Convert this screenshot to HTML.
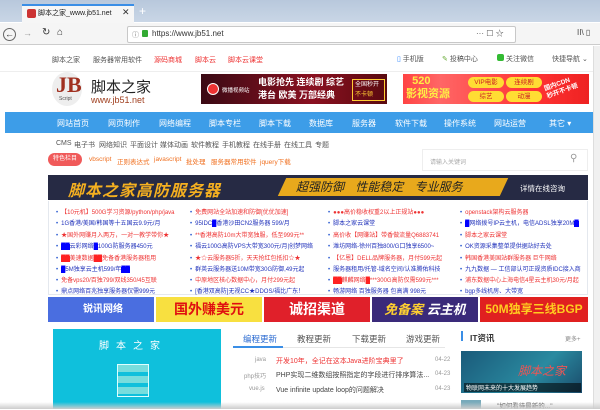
<!DOCTYPE html>
<html><head><meta charset="utf-8"><style>
*{margin:0;padding:0;box-sizing:border-box}
body{width:600px;height:409px;overflow:hidden;background:#fff;font-family:"Liberation Sans","Noto Sans CJK SC",sans-serif;font-size:8px;color:#333;position:relative}
.a{position:absolute;white-space:nowrap}
.r{color:#e33}.b{color:#2233bb}.o{color:#f07020}
.nav span{position:absolute;top:6px;color:#fff;font-size:8px}
.sub span{position:absolute;color:#555;font-size:7px}
.lst div{position:absolute;font-size:6px;white-space:nowrap;overflow:hidden;max-width:132px}
.lst div:before{content:"•";color:#2a5ad0;margin-right:3px}
</style></head><body>
<div class="a" style="left:0;top:0;width:600px;height:22px;background:linear-gradient(#b8c8dc,#c9d6e6)"></div>
<div class="a" style="left:22px;top:4px;width:112px;height:19px;background:#f6f6f6;border-top:2px solid #3a8ee6"></div>
<div class="a" style="left:27px;top:9px;width:9px;height:9px;background:#c33;border-radius:2px"></div>
<div class="a" style="left:38px;top:8px;font-size:7px;color:#222">脚本之家_www.jb51.net</div>
<div class="a" style="left:122px;top:7px;font-size:9px;color:#333">✕</div>
<div class="a" style="left:139px;top:4px;font-size:12px;color:#fff">+</div>
<div class="a" style="left:0;top:23px;width:600px;height:22px;background:#f5f5f5;border-bottom:1px solid #ccc"></div>
<div class="a" style="left:3px;top:28px;width:13px;height:13px;border:1px solid #666;border-radius:50%;font-size:9px;line-height:11px;text-align:center">←</div>
<div class="a" style="left:23px;top:28px;font-size:9px;color:#999">→</div>
<div class="a" style="left:42px;top:27px;font-size:10px;color:#333">↻</div>
<div class="a" style="left:57px;top:27px;font-size:10px;color:#333">⌂</div>
<div class="a" style="left:127px;top:26px;width:389px;height:17px;background:#fff;border:1px solid #c8c8c8;border-radius:2px"></div>
<div class="a" style="left:132px;top:30px;font-size:7px;color:#777">ⓘ</div>
<div class="a" style="left:142px;top:30px;width:6px;height:7px;background:#3a3;border-radius:1px"></div>
<div class="a" style="left:152px;top:29px;font-size:8px;color:#333">https://www.jb51.net</div>
<div class="a" style="left:476px;top:28px;font-size:8px;color:#555">··· ☐ ☆</div>
<div class="a" style="left:577px;top:28px;font-size:8px;color:#444">II\ ▯</div>
<div class="a" style="left:0;top:46px;width:600px;height:26px;border-bottom:1px solid #eee"></div>
<div class="a" style="top:55px;left:52px;color:#555;font-size:7px">脚本之家</div>
<div class="a" style="top:55px;left:93px;color:#555;font-size:7px">服务器常用软件</div>
<div class="a r" style="top:55px;left:154px;font-size:7px">源码商城</div>
<div class="a r" style="top:55px;left:195px;font-size:7px">脚本云</div>
<div class="a r" style="top:55px;left:228px;font-size:7px">脚本云课堂</div>
<div class="a" style="top:54px;left:397px;color:#555;font-size:7px"><span style="color:#38f">▯</span> 手机版</div>
<div class="a" style="top:54px;left:442px;color:#555;font-size:7px"><span style="color:#6a3">✎</span> 投稿中心</div>
<div class="a" style="top:54px;left:497px;color:#555;font-size:7px"><span style="display:inline-block;width:7px;height:7px;background:#3b3;border-radius:2px"></span> 关注微信</div>
<div class="a" style="top:54px;left:552px;color:#555;font-size:7px">快捷导航 ⌄</div>
<div class="a" style="left:52px;top:72px;width:30px;height:34px;border-radius:50%;background:#eee"></div>
<div class="a" style="left:56px;top:72px;font-size:22px;font-weight:bold;color:#a03020;font-family:'Liberation Serif',serif">JB</div>
<div class="a" style="left:59px;top:96px;font-size:5px;color:#555">Script</div>
<div class="a" style="left:91px;top:76px;font-size:15px;color:#222">脚本之家</div>
<div class="a" style="left:91px;top:95px;font-size:9px;color:#a04020">www.jb51.net</div>
<div class="a" style="left:201px;top:74px;width:186px;height:30px;background:linear-gradient(90deg,#3a0a14,#8a1020 60%,#5a0a10)"></div>
<div class="a" style="left:207px;top:83px;width:12px;height:12px;border-radius:50%;background:#e33;border:1px solid #fff"></div>
<div class="a" style="left:222px;top:86px;font-size:5.5px;color:#fff">微播视频站</div>
<div class="a" style="left:258px;top:76px;font-size:9px;color:#fff;font-weight:bold;line-height:13px">电影抢先 连续剧 综艺<br>港台 欧美 万部经典</div>
<div class="a" style="left:352px;top:79px;width:33px;height:22px;border:1px solid #fc3;font-size:6px;color:#fff;line-height:10px;padding-left:2px">全国秒开<br><span style="color:#fc3">不卡顿</span></div>
<div class="a" style="left:403px;top:74px;width:186px;height:30px;background:linear-gradient(90deg,#f44 0%,#f66 20%,#f33 70%,#e22)"></div>
<div class="a" style="left:406px;top:75px;font-size:11px;color:#fe4;font-weight:bold;line-height:13px">&nbsp;&nbsp;520<br>影视资源</div>
<div class="a" style="left:468px;top:77px;width:36px;height:11px;background:#fd3;border-radius:6px;font-size:6.5px;color:#c22;text-align:center;line-height:11px">VIP电影</div>
<div class="a" style="left:506px;top:77px;width:36px;height:11px;background:#fd3;border-radius:6px;font-size:6.5px;color:#c22;text-align:center;line-height:11px">连续剧</div>
<div class="a" style="left:468px;top:91px;width:36px;height:11px;background:#fd3;border-radius:6px;font-size:6.5px;color:#c22;text-align:center;line-height:11px">综艺</div>
<div class="a" style="left:506px;top:91px;width:36px;height:11px;background:#fd3;border-radius:6px;font-size:6.5px;color:#c22;text-align:center;line-height:11px">动漫</div>
<div class="a" style="left:545px;top:80px;font-size:6.5px;color:#fff;font-weight:bold;transform:rotate(-20deg);line-height:8px">国内CDN<br>秒开不卡顿</div>
<div class="a nav" style="left:5px;top:112px;width:588px;height:21px;background:#3d9de8">
<span style="left:52px">网站首页</span><span style="left:103px">网页制作</span><span style="left:154px">网络编程</span><span style="left:204px">脚本专栏</span><span style="left:254px">脚本下载</span><span style="left:304px">数据库</span><span style="left:347px">服务器</span><span style="left:390px">软件下载</span><span style="left:439px">操作系统</span><span style="left:489px">网站运营</span><span style="left:544px">其它 ▾</span></div>
<div class="sub">
<span style="left:56px;top:140px">CMS</span><span style="left:74px;top:140px">电子书</span><span style="left:99px;top:140px">网络知识</span><span style="left:130px;top:140px">平面设计</span><span style="left:160px;top:140px">媒体动画</span><span style="left:191px;top:140px">软件教程</span><span style="left:222px;top:140px">手机教程</span><span style="left:253px;top:140px">在线手册</span><span style="left:284px;top:140px">在线工具</span><span style="left:315px;top:140px">专题</span></div>
<div class="a" style="left:48px;top:153px;width:34px;height:13px;background:#f05a5a;border-radius:7px;color:#fff;font-size:6px;text-align:center;line-height:13px">特色栏目</div>
<div class="a o" style="left:89px;top:156px;font-size:6.5px">vbscript</div>
<div class="a o" style="left:117px;top:156px;font-size:6.5px">正则表达式</div>
<div class="a o" style="left:154px;top:156px;font-size:6.5px">javascript</div>
<div class="a o" style="left:186px;top:156px;font-size:6.5px">批处理</div>
<div class="a o" style="left:211px;top:156px;font-size:6.5px">服务器常用软件</div>
<div class="a o" style="left:260px;top:156px;font-size:6.5px">jquery下载</div>
<div class="a" style="left:422px;top:149px;width:166px;height:22px;border:1px solid #eee;background:#fff"></div>
<div class="a" style="left:430px;top:157px;font-size:6px;color:#aaa">请输入关键词</div>
<div class="a" style="left:570px;top:153px;font-size:10px;color:#999">⚲</div>
<div class="a" style="left:48px;top:175px;width:540px;height:25px;background:#262a44"></div>
<div class="a" style="left:68px;top:177px;font-size:16px;font-weight:bold;font-style:italic;color:#f5b020;letter-spacing:1px">脚本之家高防服务器</div>
<div class="a" style="left:282px;top:178px;width:222px;height:18px;background:#e8a91c;transform:skewX(-25deg)"></div>
<div class="a" style="left:296px;top:178px;font-size:12px;color:#222;font-style:italic;word-spacing:8px">超强防御 性能稳定 专业服务</div>
<div class="a" style="left:520px;top:183px;font-size:7.5px;color:#fff">详情在线咨询</div>
<div class="a" style="left:48px;top:201px;width:540px;height:94px;border:1px solid #e4e8ee;border-top:none"></div>
<div class="lst">
<div class="r" style="left:56px;top:207px">【10元机】500G学习资源/python/php/java</div>
<div class="b" style="left:56px;top:218px">1G香港/美国/韩国等十五国云9.9元/月</div>
<div class="r" style="left:56px;top:230px">★国外网赚月入两万，一对一教学带你★</div>
<div class="b" style="left:56px;top:241px"><span style="background:#00f;color:#00f">██</span>云彩网络<span style="background:#00f;color:#00f">█</span>100G防服务器450元</div>
<div class="r" style="left:56px;top:253px"><span style="background:#f22;color:#f22">██</span>美速数据<span style="background:#f22;color:#f22">██</span>免备香港服务器租用</div>
<div class="b" style="left:56px;top:264px"><span style="background:#00f;color:#00f">█</span>5M独享云主机599/年<span style="background:#00f;color:#00f">██</span></div>
<div class="r" style="left:56px;top:275px">免备vps20/百独799/双线350/45互联</div>
<div class="b" style="left:56px;top:286px">鼎点网络百兆独享服务器仅需999元</div>
<div class="r" style="left:190px;top:207px">免费网站全站加速和防御[优优加速]</div>
<div class="b" style="left:190px;top:218px">95IDC<span style="background:#00f;color:#00f">█</span>香港沙田CN2服务器 599/月</div>
<div class="r" style="left:190px;top:230px">**香港高防10m大带宽独服，低至999元**</div>
<div class="b" style="left:190px;top:241px">福云100G高防VPS大带宽300元/月|创梦网络</div>
<div class="r" style="left:190px;top:253px">★☆云服务器5折，天天抢红包抵扣☆★</div>
<div class="b" style="left:190px;top:264px">群英云服务器送10M带宽30G防御,49元起</div>
<div class="r" style="left:190px;top:275px">中原地区核心数据中心，月付299元起</div>
<div class="b" style="left:190px;top:286px">[香港双高防]无视CC★DDOS/福比广东！</div>
<div class="r" style="left:328px;top:207px">●●●高价稳收权重2以上正规站●●●</div>
<div class="b" style="left:328px;top:218px">脚本之家云课堂</div>
<div class="r" style="left:328px;top:230px">高价收【网赚站】带香做流量Q6883741</div>
<div class="b" style="left:328px;top:241px">潍坊网络-徐州百独800/G口独享6500~</div>
<div class="r" style="left:328px;top:253px">【亿恩】DELL品牌服务器，月付599元起</div>
<div class="b" style="left:328px;top:264px">服务器租用/托管-域名空间/认准腾佑科技</div>
<div class="r" style="left:328px;top:275px"><span style="background:#f22;color:#f22">██</span>麒麟网络<span style="background:#f22;color:#f22">█</span>***300G高防仅需599元***</div>
<div class="b" style="left:328px;top:286px">畅游网络 百独服务器 包高满 998元</div>
<div class="r" style="left:460px;top:207px">openstack架构云服务器</div>
<div class="b" style="left:460px;top:218px"><span style="background:#00f;color:#00f">█</span>网络拨号IP云主机，电信ADSL独享20M<span style="background:#00f;color:#00f">█</span></div>
<div class="r" style="left:460px;top:230px">脚本之家云课堂</div>
<div class="b" style="left:460px;top:241px">OK资源采集整单提供据站好去处</div>
<div class="r" style="left:460px;top:253px">韩国香港美国站群服务器 巨牛网络</div>
<div class="b" style="left:460px;top:264px">九九数据 — 工信部认可正规资质IDC接入商</div>
<div class="r" style="left:460px;top:275px">浦东数据中心上海电信4星云主机30元/月起</div>
<div class="b" style="left:460px;top:286px">bgp多线机房、大带宽</div>
</div>
<div class="a" style="left:48px;top:297px;width:106px;height:25px;background:#4a6ee0;color:#fff;font-size:10px;padding:3px 0 0 35px;font-weight:bold">锐讯网络</div>
<div class="a" style="left:156px;top:297px;width:106px;height:25px;background:#f8e040;color:#e01010;font-size:14px;font-weight:bold;text-align:center;line-height:25px">国外赚美元</div>
<div class="a" style="left:264px;top:297px;width:106px;height:25px;background:#e0202a;color:#fff;font-size:14px;font-weight:bold;text-align:center;line-height:25px">诚招渠道</div>
<div class="a" style="left:372px;top:297px;width:106px;height:25px;background:#3a2a7a;color:#ffd030;font-size:13px;font-weight:bold;text-align:center;line-height:25px;font-style:italic">免备案 <span style="color:#fff">云主机</span></div>
<div class="a" style="left:480px;top:297px;width:108px;height:25px;background:#e02020;color:#ffcc20;font-size:12px;font-weight:bold;text-align:center;line-height:25px">50M独享三线BGP</div>
<div class="a" style="left:53px;top:329px;width:168px;height:80px;background:#0fc0dc"></div>
<div class="a" style="left:99px;top:337px;font-size:10px;color:#fff;letter-spacing:7px">脚本之家</div>
<div class="a" style="left:117px;top:364px;width:32px;height:33px;border:1px solid #dff;background:repeating-linear-gradient(#7dd 0 7px,#0fc0dc 7px 11px)"></div>
<div class="a" style="left:243px;top:333px;font-size:8.5px;color:#2a6ad0">编程更新</div>
<div class="a" style="left:297px;top:333px;font-size:8.5px;color:#555">教程更新</div>
<div class="a" style="left:352px;top:333px;font-size:8.5px;color:#555">下载更新</div>
<div class="a" style="left:406px;top:333px;font-size:8.5px;color:#555">游戏更新</div>
<div class="a" style="left:233px;top:347px;width:212px;height:1px;background:#e6e6e6"></div>
<div class="a" style="left:233px;top:346px;width:50px;height:2px;background:#3a8ee6"></div>
<div class="a" style="left:255px;top:357px;font-size:6px;color:#999">java</div>
<div class="a r" style="left:276px;top:356px;font-size:7px">开发10年，全记在这本Java进阶宝典里了</div>
<div class="a" style="left:435px;top:357px;font-size:6px;color:#999">04-22</div>
<div class="a" style="left:244px;top:371px;font-size:6px;color:#999">php技巧</div>
<div class="a" style="left:276px;top:370px;font-size:7px;color:#444">PHP实现二维数组按照指定的字段进行排序算法...</div>
<div class="a" style="left:435px;top:371px;font-size:6px;color:#999">04-23</div>
<div class="a" style="left:249px;top:386px;font-size:6px;color:#999">vue.js</div>
<div class="a" style="left:276px;top:385px;font-size:7px;color:#444">Vue infinite update loop的问题解决</div>
<div class="a" style="left:435px;top:386px;font-size:6px;color:#999">04-23</div>
<div class="a" style="left:461px;top:331px;width:2px;height:10px;background:#3a8ee6"></div>
<div class="a" style="left:470px;top:332px;font-size:8.5px;color:#333;font-weight:bold">IT资讯</div>
<div class="a" style="left:565px;top:334px;font-size:6px;color:#888">更多+</div>
<div class="a" style="left:461px;top:351px;width:121px;height:42px;background:linear-gradient(135deg,#1a5a7a,#2a8aa0 60%,#1a4a6a)"></div>
<div class="a" style="left:518px;top:362px;font-size:12px;color:#e55;font-style:italic">脚本之家</div>
<div class="a" style="left:464px;top:383px;width:117px;height:9px;background:rgba(0,0,0,.55);color:#fff;font-size:6px;padding-left:2px">物联网未来的十大发展趋势</div>
<div class="a" style="left:461px;top:400px;width:20px;height:9px;background:#7ab"></div>
<div class="a" style="left:497px;top:400px;font-size:6.5px;color:#444">"如何看待最新的..."</div>
<div class="a" style="left:593px;top:46px;width:7px;height:363px;background:#f0f0f0;border-left:1px solid #ddd"></div>
<div class="a" style="left:0;top:402px;width:600px;height:7px;background:linear-gradient(transparent,#ccc)"></div>
</body></html>
